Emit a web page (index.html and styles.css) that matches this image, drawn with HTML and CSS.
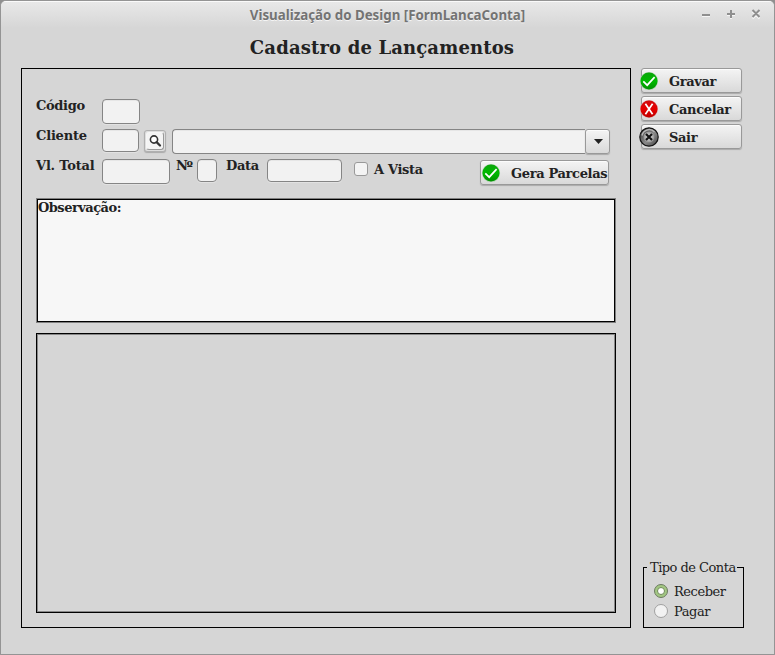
FILE: index.html
```
<!DOCTYPE html>
<html lang="pt-BR">
<head>
<meta charset="utf-8">
<title>Visualização do Design [FormLancaConta]</title>
<link rel="stylesheet" href="styles.css">
</head>
<body>
<svg class="defs" width="0" height="0">
  <defs>
    <linearGradient id="green" x1="0" y1="0" x2="0" y2="1"><stop offset="0" stop-color="#0ba50b"/><stop offset=".5" stop-color="#00ba00"/><stop offset="1" stop-color="#009000"/></linearGradient>
    <linearGradient id="red" x1="0" y1="0" x2="0" y2="1"><stop offset="0" stop-color="#d00c10"/><stop offset=".5" stop-color="#e60000"/><stop offset="1" stop-color="#bd0000"/></linearGradient>
    <linearGradient id="dark" x1="0" y1="0" x2="1" y2="1"><stop offset="0" stop-color="#333"/><stop offset=".55" stop-color="#888"/><stop offset="1" stop-color="#444"/></linearGradient>
    <radialGradient id="shine"><stop offset="0" stop-color="#f0f0f0"/><stop offset="1" stop-color="#909090"/></radialGradient>
    <symbol id="ok" viewBox="0 0 20 20"><circle cx="10" cy="10" r="9.1" fill="#a9d0a9"/><circle cx="10" cy="10" r="8.5" fill="url(#green)"/><path d="M4.300 10.400 8.200 14.200 15.600 6.200" fill="none" stroke="#fff" stroke-width="1.700"/></symbol>
    <symbol id="cancel" viewBox="0 0 20 20"><circle cx="10" cy="10" r="9" fill="#dba0a0"/><circle cx="10" cy="10" r="8.500" fill="url(#red)"/><path d="M6.400 4.800 13.600 15.200M13.600 4.800 6.400 15.200" stroke="#fff" stroke-width="1.700"/></symbol>
    <symbol id="exit" viewBox="0 0 20 20"><circle cx="10" cy="10" r="9.200" fill="url(#dark)" stroke="#151515" stroke-width="1.200"/><path d="M3 8.500A7.300 7.300 0 0 1 15.500 5" fill="none" stroke="#b5b5b5" stroke-width="1.500"/><circle cx="10" cy="10" r="5.500" fill="url(#shine)"/><path d="M7 7 13 13M13 7 7 13" stroke="#111" stroke-width="2.100"/></symbol>
  </defs>
</svg>
<div class="window">
  <header class="titlebar">
    <span class="caption">Visualização do Design [FormLancaConta]</span>
    <svg class="controls" width="60" height="12" viewBox="0 0 60 12">
      <g class="glyph-light" transform="translate(0 1)"><path d="M1 7H9M26 6H34M30 2V10M51.500 2.500 58.500 9.500M58.500 2.500 51.500 9.500"/></g>
      <g class="glyph"><path d="M1 7H9M26 6H34M30 2V10M51.500 2 58.500 9M58.500 2 51.500 9"/></g>
    </svg>
  </header>
  <h1>Cadastro de Lançamentos</h1>
  <div class="content">
    <main class="panel">
      <div class="row row-code"><label>Código</label><span class="field code"></span></div>
      <div class="row"><label class="client-label">Cliente</label><span class="field client"></span>
        <button class="search"><span class="search-face"><svg width="14" height="14" viewBox="0 0 14 14"><circle cx="6" cy="5.500" r="3.600" fill="#fff" stroke="#333" stroke-width="1.600"/><path d="M8.600 8.100 12 11.500" stroke="#333" stroke-width="2.200" stroke-linecap="round"/></svg></span></button>
        <span class="combo"><span class="combo-value"></span><button class="combo-arrow"><svg width="9" height="5" viewBox="0 0 9 5"><path d="M0 0H9L4.500 5Z" fill="#222"/></svg></button></span>
      </div>
      <div class="row"><label class="total-label">Vl. Total</label><span class="field total"></span><label class="num-label">Nº</label><span class="field num"></span><label class="date-label">Data</label><span class="field date"></span><span class="check"></span><label class="cash-label">A Vista</label>
        <button class="action generate"><svg class="icon" width="20" height="20"><use href="#ok"/></svg><span>Gera Parcelas</span></button>
      </div>
      <div class="notes">Observação:</div>
      <div class="parcels"></div>
    </main>
    <aside>
      <button class="action"><svg class="icon" width="20" height="20"><use href="#ok"/></svg><span>Gravar</span></button>
      <button class="action"><svg class="icon" width="20" height="20"><use href="#cancel"/></svg><span>Cancelar</span></button>
      <button class="action"><svg class="icon" width="20" height="20"><use href="#exit"/></svg><span>Sair</span></button>
      <fieldset><legend>Tipo de Conta</legend>
        <div class="option"><svg class="radio" width="14" height="14"><circle cx="7" cy="7" r="6.500" fill="#a3c783" stroke="#6c7a60"/><circle cx="7" cy="7" r="3.500" fill="#fff" stroke="#6f8a58"/></svg><span>Receber</span></div>
        <div class="option"><svg class="radio" width="14" height="14"><circle cx="7" cy="7" r="6.500" fill="#f2f2f2" stroke="#a0a0a0"/></svg><span>Pagar</span></div>
      </fieldset>
    </aside>
  </div>
</div>
</body>
</html>
```
FILE: styles.css
```
* { box-sizing: border-box; }
body { margin: 0; background: #8f8f8f; font: bold 13px/16px "DejaVu Serif", serif; letter-spacing: -0.35px; color: #222; overflow: hidden; }
.defs { position: absolute; }
.window { width: 775px; height: 655px; border: 1px solid #949494; border-radius: 6px 6px 0 0; background: #d6d6d6; overflow: hidden; }
.titlebar { position: relative; height: 27px; background: linear-gradient(#e8e8e8, #d6d6d6); border-top: 1px solid #fafafa; text-align: center; }
.caption { display: block; padding-top: 4px; font: bold 13.300px/18px "Noto Sans", sans-serif; letter-spacing: 0; color: #737373; text-shadow: 0 1px #f4f4f4; white-space: nowrap; }
.controls { position: absolute; right: 13px; top: 6px; fill: none; stroke-width: 2; }
.glyph { stroke: #8f8f8f; }
.glyph-light { stroke: #f6f6f6; }
h1 { margin: 8px 0 0 -11px; height: 32px; font-size: 18px; line-height: 24px; letter-spacing: 0.15px; text-align: center; white-space: nowrap; }
.content { display: flex; margin-left: 20px; }
.panel { width: 610px; height: 560px; border: 1px solid #000; padding: 30px 14px 0; }
.row { display: flex; align-items: flex-start; height: 30px; white-space: nowrap; }
label { line-height: 16px; margin-top: -1px; }
.row > label:first-child { width: 66px; flex: none; }
.client-label, .total-label { letter-spacing: -0.200px; }
.field { flex: none; border: 1px solid #858585; border-radius: 4px; background: #f2f2f2; box-shadow: 0 1px #e2e2e2, inset 0 1px #e6e6e6; height: 23px; }
.code { width: 38px; height: 25px; }
.client { width: 37px; }
.total { width: 68px; height: 25px; }
.num-label { width: 21px; margin-left: 6px; letter-spacing: -1.300px; }
.num { width: 20px; }
.date-label { width: 41px; margin-left: 9px; }
.date { width: 75px; }
button { appearance: none; margin: 0; padding: 0; color: inherit; font: inherit; letter-spacing: inherit; border: 1px solid #999; border-radius: 3px; background: linear-gradient(#f4f4f4, #d9d9d9); box-shadow: 0 1px 1px #aaa, inset 0 1px #fcfcfc; }
.search { display: flex; align-items: center; justify-content: center; width: 22px; height: 22px; margin: 1px 0 0 5px; border-color: #b0b0b0; background: #dedede; box-shadow: 0 1px 1px #aaa; }
.search-face { display: flex; align-items: center; justify-content: center; width: 18px; height: 18px; border: 1px solid #f6f6f6; border-right-color: #999; border-bottom-color: #999; border-radius: 3px; background: #f4f4f4; }
.combo { display: flex; margin-left: 6px; width: 438px; height: 25px; }
.combo-value { flex: 1; border: 1px solid #858585; border-right: 0; border-radius: 4px 0 0 4px; background: #f2f2f2; box-shadow: inset 0 1px #e6e6e6; }
.combo-arrow { width: 25px; display: flex; align-items: center; justify-content: center; }
.combo-arrow svg { margin-left: 1px; }
.check { width: 14px; height: 14px; margin: 3px 0 0 12px; border: 1px solid #999; border-radius: 3px; background: #f4f4f4; }
.cash-label { width: 106px; margin: 3px 0 0 6px; }
.action { display: flex; align-items: center; width: 101px; height: 25px; margin-bottom: 3px; text-align: left; white-space: nowrap; }
.action span { padding-top: 2px; }
.icon { flex: none; margin: 0 10px 0 -3px; }
.generate { width: 129px; margin-top: 1px; flex: none; }
.generate .icon { margin: 0 10px 0 0; }
.notes { height: 125px; margin-top: 9px; border: 1px solid #808080; background: #f7f7f7; box-shadow: inset 0 0 0 1px #000; padding: 1px; letter-spacing: -0.520px; }
.parcels { height: 280px; margin-top: 10px; border: 1px solid #000; box-shadow: inset 0 0 0 1px #888; }
aside { margin-left: 10px; display: flex; flex-direction: column; height: 560px; }
fieldset { position: relative; width: 101px; height: 61px; margin: auto 0 0 2px; padding: 13px 0 0 10px; border: 1px solid #000; font-weight: normal; letter-spacing: -0.450px; }
legend { position: absolute; left: 3px; top: -8px; width: 90px; padding: 0 0 0 3px; background: #d6d6d6; white-space: nowrap; letter-spacing: -0.520px; }
.option { display: flex; align-items: center; height: 20px; gap: 6px; }
.option span { padding-top: 2px; }
.radio { flex: none; }
```
